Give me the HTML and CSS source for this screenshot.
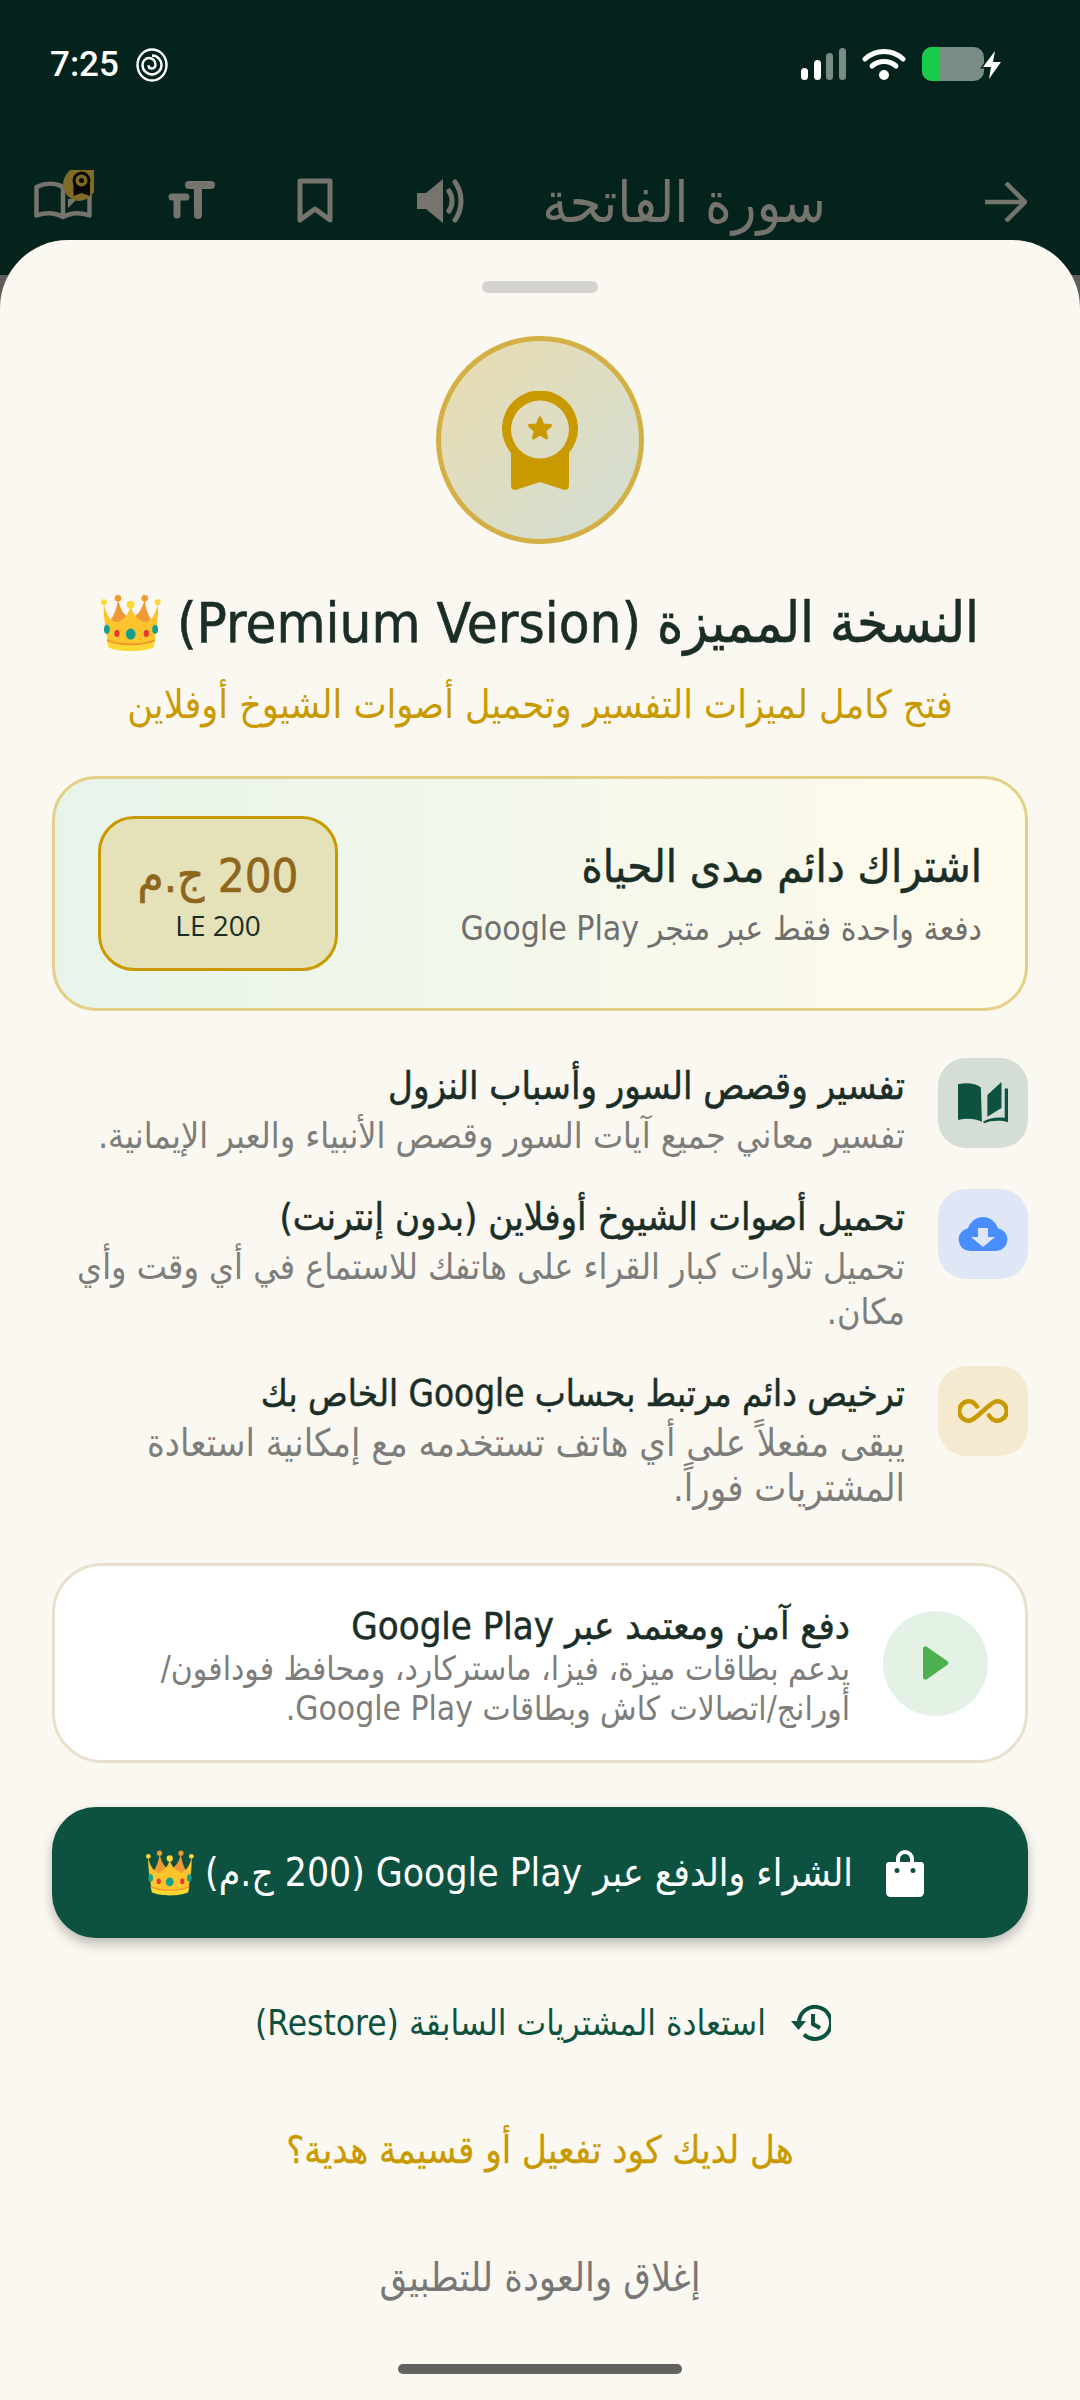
FILE: index.html
```html
<!DOCTYPE html>
<html lang="ar" dir="rtl">
<head>
    <meta charset="UTF-8">
    <meta name="viewport" content="width=device-width, initial-scale=1.0">
    <title>النسخة المميزة</title>
    <link rel="stylesheet" href="styles.css">
</head>
<body>
    <svg class="defs" width="0" height="0">
        <defs>
            <linearGradient id="crownGold" x1="0" y1="0" x2="0" y2="1"><stop offset="0" stop-color="#fbc02d"/><stop offset="1" stop-color="#fdc72c"/></linearGradient>
            <symbol id="crown" viewBox="0 0 184 172">
                <path d="M52 12C50 40 40 62 26 84L158 84C144 62 136 40 134 12 126 48 110 66 91 72 72 66 60 48 52 12z" fill="#ef9a36"/>
                <circle cx="52" cy="10" r="10" fill="#f09a2e"/>
                <circle cx="134" cy="10" r="10" fill="#f09a2e"/>
                <path d="M9 26C14 60 30 80 48 84 70 78 85 60 91 34 97 60 114 78 136 84 152 80 168 60 174 26 178 60 170 100 164 140 130 162 52 162 20 140 14 100 6 60 9 26z" fill="url(#crownGold)"/>
                <path d="M18 138C54 156 130 156 166 138L162 160C130 176 54 176 22 160z" fill="#fdd835"/>
                <path d="M18 138C54 156 130 156 166 138" fill="none" stroke="#f0932b" stroke-width="5"/>
                <circle cx="9" cy="22" r="9" fill="#fdd835"/>
                <circle cx="174" cy="22" r="9" fill="#fdd835"/>
                <circle cx="91" cy="30" r="12" fill="#fdd835"/>
                <ellipse cx="91" cy="120" rx="15" ry="17" fill="#16a08c"/>
                <ellipse cx="49" cy="118" rx="8" ry="11" fill="#e53935"/>
                <ellipse cx="139" cy="118" rx="8" ry="11" fill="#e53935"/>
                <ellipse cx="18" cy="105" rx="9" ry="14" fill="#16a08c"/>
                <ellipse cx="166" cy="105" rx="9" ry="14" fill="#16a08c"/>
            </symbol>
        </defs>
    </svg>
    <div class="screen">
        <div class="top">
            <div class="status" dir="ltr">
                <div class="status-left">
                    <span class="time">7:25</span>
                    <svg class="spiral" viewBox="0 0 32 34" fill="none" stroke="#fff" stroke-width="2.4"><ellipse cx="16" cy="17" rx="14.500" ry="15.500"/><path d="M16 7.500a9.500 9.500 0 1 1-9.500 9.500c0-4 3-7 6.500-7a6.500 6.500 0 0 1 6.500 6.500c0 2.300-1.700 4-3.700 4s-3.300-1.500-3.300-3.300"/></svg>
                </div>
                <div class="status-right">
                    <svg class="signal" viewBox="0 0 45 32"><rect x="0" y="20" width="7" height="12" rx="3.500" fill="#fff"/><rect x="13" y="12" width="7" height="20" rx="3.500" fill="#fff"/><rect x="25" y="5" width="7" height="27" rx="3.500" fill="#7a8c86"/><rect x="38" y="0" width="7" height="32" rx="3.500" fill="#7a8c86"/></svg>
                    <svg class="wifi" viewBox="0 0 44 32" fill="none" stroke="#fff" stroke-width="5" stroke-linecap="round"><path d="M3 11c11-10 27-10 38 0"/><path d="M10 18c7-6 17-6 24 0"/><circle cx="22" cy="27" r="2.500" fill="#fff"/></svg>
                    <div class="battery"><span class="battery-fill"></span></div>
                    <svg class="bolt" viewBox="0 0 26 34"><path d="M16 4 4 20h8l-2 12 12-17h-8z" fill="#fff" stroke="#05231d" stroke-width="3" paint-order="stroke"/></svg>
                </div>
            </div>
            <div class="toolbar" dir="ltr">
                <div class="tool-icons">
                    <div class="book-wrap">
                        <svg class="tool-book" viewBox="0 0 58 41" fill="none" stroke="#75746d" stroke-width="4.500" stroke-linejoin="round"><path d="M29 36C22 32 12 31 2.500 34.500V6C12 1.500 22 2 29 6c7-4 17-4.500 26.500 0v28.500C46 31 36 32 29 36zM29 6v30"/><path d="M34 27l9-9h-9z" fill="#75746d" stroke="none"/></svg>
                        <svg class="tool-badge" viewBox="0 0 31 31"><path d="M7 0H31V22C27 28 21 31 15 31 7 30 0 23 0 15 0 9 3 4 7 0z" fill="#7f6a28"/><path d="M10.500 14v12l8-3 8.500 3V14z" fill="#080808"/><circle cx="18.500" cy="10.500" r="7.500" fill="#7f6a28" stroke="#080808" stroke-width="3"/><circle cx="18.500" cy="10.500" r="2.500" fill="#080808"/></svg>
                    </div>
                    <svg class="tool-text" viewBox="0 0 50 40" fill="none" stroke="#75746d" stroke-linecap="round"><path d="M24 5h22M33 5v30" stroke-width="8"/><path d="M7 17h14M12 17v18" stroke-width="7"/></svg>
                    <svg class="tool-mark" viewBox="0 0 36 46" fill="none" stroke="#75746d" stroke-width="5" stroke-linejoin="round"><path d="M3 3h30v39L18 31 3 42z"/></svg>
                    <svg class="tool-sound" viewBox="0 0 48 46"><path d="M0 15h9L26 1v44L9 31H0z" fill="#75746d"/><path d="M32 13c4 6 4 14 0 20M38 4c8 11 8 27 0 38" fill="none" stroke="#75746d" stroke-width="5" stroke-linecap="round"/></svg>
                </div>
                <span class="surah" dir="rtl">سورة الفاتحة</span>
                <svg class="tool-back" viewBox="0 0 42 40" fill="none" stroke="#75746d" stroke-width="4.500"><path d="M0 20h40M21 1l19 19-19 19"/></svg>
            </div>
        </div>

        <div class="sheet">
            <div class="handle"></div>

            <div class="medal">
                <svg class="medal-icon" viewBox="0 0 76 99"><path d="M9 62a38 38 0 1 1 58 0v33a4 4 0 0 1-5.300 3.800L38 91 14.300 98.800A4 4 0 0 1 9 95zM38 9.500a29 29 0 1 0 0 58 29 29 0 0 0 0-58z" fill="#c99a00" fill-rule="evenodd"/><polygon points="38,27 40.900,34 48.500,34.600 42.800,39.500 44.500,46.900 38,43 31.500,46.900 33.200,39.500 27.500,34.600 35.100,34" fill="#c99a00" stroke="#c99a00" stroke-width="3" stroke-linejoin="round"/></svg>
            </div>

            <h1 class="title">
                <span>النسخة المميزة (Premium Version)</span>
                <svg class="crown-lg"><use href="#crown"/></svg>
            </h1>
            <p class="subtitle">فتح كامل لميزات التفسير وتحميل أصوات الشيوخ أوفلاين</p>

            <div class="plan">
                <div class="plan-text">
                    <h2>اشتراك دائم مدى الحياة</h2>
                    <p>دفعة واحدة فقط عبر متجر Google Play</p>
                </div>
                <div class="price">
                    <strong>200 ج.م</strong>
                    <span dir="ltr">LE 200</span>
                </div>
            </div>

            <div class="features">
                <div class="feature">
                    <div class="feature-icon icon-green">
                        <svg viewBox="0 0 46 38"><path d="M21 5C16 1 8 .5 0 2v33c8-2 16-1.500 22 1.500z" fill="#0d5240"/><path d="M27 12 40 0v24l-13 8z" fill="#0d5240"/><path d="M43 6h3v31c-7-2-16-1.500-22 1l-1-1.500c6-3.500 13-4.500 20-3.500z" fill="#0d5240"/></svg>
                    </div>
                    <div class="feature-text">
                        <h3>تفسير وقصص السور وأسباب النزول</h3>
                        <p>تفسير معاني جميع آيات السور وقصص الأنبياء والعبر الإيمانية.</p>
                    </div>
                </div>
                <div class="feature">
                    <div class="feature-icon icon-blue">
                        <svg viewBox="0 0 50 34"><path d="M12 34a11.500 11.500 0 0 1-2-22.800C12.500 4.500 18.300 0 25 0s12.500 4.500 15 11.200A11.500 11.500 0 0 1 38 34z" fill="#4a8dff"/><path d="M20 11h10v9h7L25 30 13 20h7z" fill="#dfe7f6"/></svg>
                    </div>
                    <div class="feature-text">
                        <h3>تحميل أصوات الشيوخ أوفلاين (بدون إنترنت)</h3>
                        <p>تحميل تلاوات كبار القراء على هاتفك للاستماع في أي وقت وأي<br>مكان.</p>
                    </div>
                </div>
                <div class="feature feature-last">
                    <div class="feature-icon icon-gold">
                        <svg viewBox="0 0 50 24" fill="none" stroke="#c99a00" stroke-width="4.500" stroke-linecap="round"><path d="M19 7.500C16.500 4 14 2.200 11 2.200a9.800 9.800 0 0 0 0 19.600c7 0 21-19.600 28-19.600a9.800 9.800 0 0 1 0 19.600c-3 0-5.500-1.800-8-5.300"/></svg>
                    </div>
                    <div class="feature-text">
                        <h3>ترخيص دائم مرتبط بحساب Google الخاص بك</h3>
                        <p>يبقى مفعلاً على أي هاتف تستخدمه مع إمكانية استعادة<br>المشتريات فوراً.</p>
                    </div>
                </div>
            </div>

            <div class="pay">
                <div class="pay-icon">
                    <svg viewBox="0 0 26 34"><path d="M0 3c0-2.500 2.700-3.700 4.500-1.800l20 14c1.200 1 1.200 2.600 0 3.600l-20 14C2.700 34.700 0 33.500 0 31z" fill="#4caf50"/></svg>
                </div>
                <div class="pay-text">
                    <h3>دفع آمن ومعتمد عبر Google Play</h3>
                    <p>يدعم بطاقات ميزة، فيزا، ماستركارد، ومحافظ فودافون/<br>أورانج/اتصالات كاش وبطاقات Google Play.</p>
                </div>
            </div>

            <button class="buy">
                <svg class="bag" viewBox="0 0 38 48"><path d="M10 13V10a9 9 0 0 1 18 0v3h7c1.500 0 3 1.200 3 3v27c0 3-2 5-5 5H5c-3 0-5-2-5-5V16c0-1.800 1.500-3 3-3zm4 0h10v-3a5 5 0 0 0-10 0zm-3 6a2.500 2.500 0 1 0 0 5 2.500 2.500 0 0 0 0-5zm16 0a2.500 2.500 0 1 0 0 5 2.500 2.500 0 0 0 0-5z" fill="#fff" fill-rule="evenodd"/></svg>
                <span>الشراء والدفع عبر Google Play (200 ج.م)</span>
                <svg class="crown-sm"><use href="#crown"/></svg>
            </button>

            <div class="restore">
                <svg viewBox="0 0 40 36" fill="none" stroke="#0d5240" stroke-width="4"><path d="M8 18a16 16 0 1 1 5 11.500"/><path d="M22 9v10l7 4"/><path d="M0 16h15l-7.500 9z" fill="#0d5240" stroke="none"/></svg>
                <span>استعادة المشتريات السابقة (Restore)</span>
            </div>
            <div class="gift">هل لديك كود تفعيل أو قسيمة هدية؟</div>
            <div class="close">إغلاق والعودة للتطبيق</div>
            <div class="home-bar"></div>
        </div>
    </div>
</body>
</html>
```

FILE: styles.css
```css
* { box-sizing: border-box; }
html, body { margin: 0; padding: 0; }
body { width: 1080px; height: 2400px; overflow: hidden; background: #5e5e5b; font-family: "DejaVu Sans Condensed", "DejaVu Sans", sans-serif; color: #1a2e27; }
h1, h2, h3, p { margin: 0; font-weight: normal; }
svg { display: block; }
.defs { position: absolute; }
.screen { height: 2400px; display: flex; flex-direction: column; }

/* dimmed app behind the sheet */
.top { height: 275px; background: #05231d; flex: none; }
.status { height: 130px; padding: 47px 75px 0 50px; display: flex; justify-content: space-between; align-items: flex-start; }
.status-left { display: flex; align-items: center; gap: 17px; }
.time { color: #fff; font-family: Roboto, sans-serif; font-size: 35px; line-height: 35px; font-weight: 500; }
.spiral { width: 32px; height: 34px; }
.status-right { display: flex; align-items: flex-start; }
.signal { width: 45px; height: 32px; margin-top: 1px; }
.wifi { width: 44px; height: 32px; margin: 1px 16px 0 16px; }
.battery { width: 62px; height: 34px; border-radius: 10px; background: #7a8c86; overflow: hidden; }
.battery-fill { display: block; width: 18px; height: 34px; background: #17cc4a; }
.bolt { width: 26px; height: 34px; margin-left: -5px; }

.toolbar { padding: 40px 53px 0 34px; display: flex; align-items: flex-start; }
.tool-icons { display: flex; align-items: flex-start; width: 513px; }
.book-wrap { position: relative; width: 58px; height: 41px; margin-top: 11px; }
.tool-book { width: 58px; height: 41px; }
.tool-badge { position: absolute; left: 29px; top: -11px; width: 31px; height: 31px; }
.tool-text { width: 50px; height: 40px; margin: 10px 0 0 73px; }
.tool-mark { width: 36px; height: 46px; margin: 8px 0 0 82px; }
.tool-sound { width: 48px; height: 46px; margin: 8px 0 0 84px; }
.surah { color: #75746d; font-size: 57px; line-height: 56px; width: 279px; margin-top: 4px; white-space: nowrap; text-align: center; }
.tool-back { width: 42px; height: 40px; margin: 12px 0 0 159px; }

.sheet { flex: 1; margin-top: -35px; background: #fbf8f1; border-radius: 68px 68px 0 0; padding: 41px 52px 0; display: flex; flex-direction: column; align-items: center; }
.handle { width: 116px; height: 12px; background: #d4d3cf; border-radius: 6px; flex: none; }

.medal { width: 208px; height: 208px; margin-top: 43px; border: 5px solid #d4af44; border-radius: 50%; background: linear-gradient(135deg, #e9dcb0, #d3ded5); display: flex; align-items: center; justify-content: center; flex: none; }
.medal-icon { width: 76px; height: 99px; }

.title { margin-top: 45px; display: flex; align-items: center; gap: 16px; font-size: 56px; line-height: 68px; -webkit-text-stroke: .6px #1a2e27; white-space: nowrap; }
.crown-lg { width: 60px; height: 58px; }
.subtitle { margin-top: 23px; color: #c99a00; font-size: 39px; line-height: 50px; white-space: nowrap; }

.plan { width: 976px; height: 235px; margin-top: 46px; border: 3px solid #e3cf85; border-radius: 44px; background: linear-gradient(90deg, #e8f4ea, #fffbec); padding: 0 43px; display: flex; align-items: center; justify-content: space-between; flex: none; }
.plan-text h2 { font-size: 45px; line-height: 60px; -webkit-text-stroke: .5px #1a2e27; }
.plan-text p { font-size: 33.500px; line-height: 44px; color: #6f6f6f; margin-top: 10px; }
.price { width: 240px; height: 155px; border: 3px solid #c99a00; border-radius: 36px; background: #e5e2ba; display: flex; flex-direction: column; align-items: center; justify-content: center; }
.price strong { color: #8e661c; font-size: 47px; line-height: 62px; font-weight: normal; -webkit-text-stroke: .6px #8e661c; white-space: nowrap; }
.price span { font-size: 28px; line-height: 36px; font-weight: 500; font-family: "Open Sans", sans-serif; }

.features { width: 976px; margin-top: 47px; display: flex; flex-direction: column; }
.feature { display: flex; gap: 33px; padding-bottom: 31px; }
.feature-icon { width: 90px; height: 90px; border-radius: 28px; display: flex; align-items: center; justify-content: center; flex: none; }
.feature-icon svg { width: 50px; }
.icon-green { background: #d4ddd6; }
.icon-blue { background: #dfe7f6; }
.icon-gold { background: #f5e9cf; }
.feature-text h3 { font-size: 38px; line-height: 52px; -webkit-text-stroke: .5px #1a2e27; white-space: nowrap; margin-top: 2px; }
.feature-text p { font-size: 35.600px; line-height: 45px; margin-top: 1px; color: #7d7d7b; white-space: nowrap; }
.feature:nth-child(2) { padding-bottom: 32px; }
.feature-last h3 { font-size: 36.500px; }
.feature-last p { font-size: 37.800px; }

.pay { width: 976px; height: 200px; margin-top: 21px; background: #fff; border: 3px solid #e8e0cc; border-radius: 50px; padding: 0 37px 0 0; display: flex; align-items: center; gap: 33px; flex: none; }
.pay-icon { width: 105px; height: 105px; border-radius: 50%; background: #e4f1e5; display: flex; align-items: center; justify-content: center; flex: none; }
.pay-icon svg { width: 26px; height: 34px; }
.pay-text { padding-top: 6px; }
.pay-text h3 { font-size: 38px; line-height: 46px; -webkit-text-stroke: .5px #1a2e27; white-space: nowrap; }
.pay-text p { font-size: 33.300px; line-height: 40px; color: #7d7d7b; white-space: nowrap; }

.buy { width: 976px; height: 131px; margin-top: 44px; padding: 0 10px 0 0; border: 0; border-radius: 44px; background: #0d5240; box-shadow: 0 6px 12px rgba(0, 0, 0, .25); color: #fff; font: inherit; font-size: 38.700px; display: flex; align-items: center; justify-content: center; gap: 33px; flex: none; }
.bag { width: 38px; height: 48px; }
.crown-sm { width: 48px; height: 46px; margin-right: -22px; }

.restore { margin-top: 67px; padding-left: 6px; display: flex; align-items: center; gap: 25px; color: #0d5240; font-size: 35px; line-height: 36px; white-space: nowrap; }
.restore svg { width: 40px; height: 36px; }
.gift { margin-top: 86px; color: #c99a00; font-size: 38px; line-height: 46px; -webkit-text-stroke: .3px #c99a00; white-space: nowrap; }
.close { margin-top: 81px; color: #777; font-size: 39.500px; line-height: 46px; white-space: nowrap; }
.home-bar { width: 284px; height: 10px; margin-top: 64px; background: #626260; border-radius: 5px; flex: none; }
```
